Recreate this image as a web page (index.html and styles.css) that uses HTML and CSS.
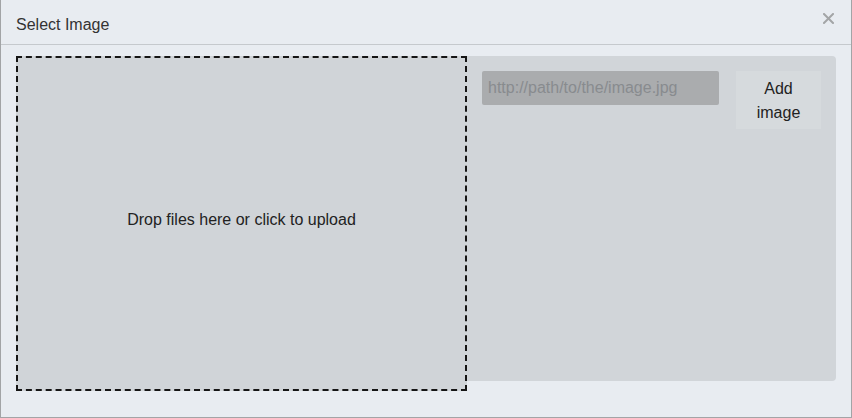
FILE: index.html
```html
<!DOCTYPE html>
<html>
<head>
<meta charset="utf-8">
<link rel="stylesheet" href="styles.css">
</head>
<body>
<div class="modal">
  <div class="modal-header">
    <span class="modal-title">Select Image</span>
    <span class="close" aria-label="close">
      <svg width="11" height="11" viewBox="0 0 11 11"><path d="M1 1L10 10M10 1L1 10" stroke="#a3a5a7" stroke-width="2" stroke-linecap="square"/></svg>
    </span>
  </div>
  <div class="modal-body">
    <div class="panel">
      <div class="dropzone">Drop files here or click to upload</div>
      <div class="url-row">
        <input class="url-input" type="text" placeholder="http://path/to/the/image.jpg">
        <button class="add-btn">Add<br>image</button>
      </div>
    </div>
  </div>
</div>
</body>
</html>
```

FILE: styles.css
```css
html, body {
  margin: 0;
  padding: 0;
  background: #e8ecf1;
}
.modal {
  box-sizing: border-box;
  width: 852px;
  height: 418px;
  border: 1px solid #a2a4a6;
  border-top: none;
  background: #e8ecf1;
  font-family: "Liberation Sans", Arial, sans-serif;
  overflow: hidden;
}
.modal-header {
  height: 45px;
  box-sizing: border-box;
  border-bottom: 1px solid #c5c9cd;
  display: flex;
  align-items: center;
  justify-content: space-between;
  padding: 0 17px 0 15px;
}
.modal-title {
  font-size: 16px;
  color: #333;
  padding-top: 5px;
}
.close {
  display: flex;
  margin-top: -7px;
}
.modal-body {
  padding: 11px 15px 0 15px;
}
.panel {
  width: 820px;
  height: 325px;
  background: #d1d5d9;
  border-radius: 4px;
  display: flex;
  align-items: flex-start;
  gap: 15px;
}
.dropzone {
  box-sizing: border-box;
  width: 451px;
  height: 335px;
  flex: none;
  border: 2px dashed #151515;
  background: #d0d4d8;
  display: flex;
  align-items: center;
  justify-content: center;
  padding-bottom: 8px;
  font-size: 16px;
  color: #222;
}
.url-row {
  display: flex;
  align-items: flex-start;
  gap: 17px;
  padding-top: 15px;
}
.url-input {
  box-sizing: border-box;
  width: 237px;
  height: 34px;
  border: none;
  border-radius: 2px;
  background: #aaacae;
  padding: 0 6px;
  font-family: "Liberation Sans", Arial, sans-serif;
  font-size: 16px;
  color: #333;
  outline: none;
}
.url-input::placeholder {
  color: #888b8e;
}
.add-btn {
  box-sizing: border-box;
  width: 85px;
  height: 58px;
  border: none;
  background: #d6dadd;
  font-family: "Liberation Sans", Arial, sans-serif;
  font-size: 16px;
  line-height: 24px;
  color: #222;
  padding: 0 0 0 0;
  padding-top: 2px;
}
```
